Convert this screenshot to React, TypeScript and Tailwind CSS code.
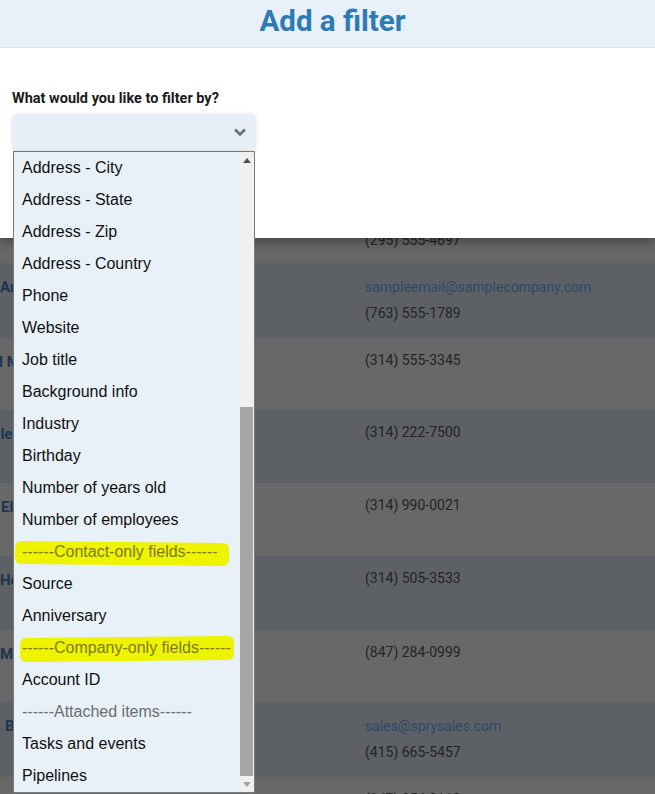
import React from "react";

const rows = [
  { name: "Ann Arbor", offset: "ml-[-40px]", email: "hidden@sample.com", phone: "(295) 555-4697", h: "h-[73px]", bg: "bg-[#686868]" },
  { name: "Arnold Reyes", offset: "ml-[0px]", email: "sampleemail@samplecompany.com", phone: "(763) 555-1789", h: "h-[75px]", bg: "bg-[#5d6166]" },
  { name: "Al Moore", offset: "ml-[-11px]", email: "", phone: "(314) 555-3345", h: "h-[72px]", bg: "bg-[#686868]" },
  { name: "Michelle Ray", offset: "ml-[-45px]", email: "", phone: "(314) 222-7500", h: "h-[73px]", bg: "bg-[#5d6166]" },
  { name: "Ellen Park", offset: "ml-[1px]", email: "", phone: "(314) 990-0021", h: "h-[73px]", bg: "bg-[#686868]" },
  { name: "Hope Lane", offset: "ml-[0px]", email: "", phone: "(314) 505-3533", h: "h-[74px]", bg: "bg-[#5d6166]" },
  { name: "Mark Stone", offset: "ml-[0px]", email: "", phone: "(847) 284-0999", h: "h-[72px]", bg: "bg-[#686868]" },
  { name: "Bob Smith", offset: "ml-[5px]", email: "sales@sprysales.com", phone: "(415) 665-5457", h: "h-[75px]", bg: "bg-[#5d6166]" },
  { name: "Tom Grey", offset: "ml-[-30px]", email: "", phone: "(847) 254-0110", h: "h-[73px]", bg: "bg-[#686868]" },
];

type Opt = { label: string; kind?: "group" | "mark" };

const options: Opt[] = [
  { label: "Address - City" },
  { label: "Address - State" },
  { label: "Address - Zip" },
  { label: "Address - Country" },
  { label: "Phone" },
  { label: "Website" },
  { label: "Job title" },
  { label: "Background info" },
  { label: "Industry" },
  { label: "Birthday" },
  { label: "Number of years old" },
  { label: "Number of employees" },
  { label: "------Contact-only fields------", kind: "mark" },
  { label: "Source" },
  { label: "Anniversary" },
  { label: "------Company-only fields------", kind: "mark" },
  { label: "Account ID" },
  { label: "------Attached items------", kind: "group" },
  { label: "Tasks and events" },
  { label: "Pipelines" },
];

const Background = () => (
  <div className="pt-[190px] font-['Roboto',sans-serif]">
    {rows.map((r, i) => (
      <div key={i} className={`flex ${r.h} ${r.bg}`}>
        <div className="w-[365px] shrink-0 pt-[14px] overflow-hidden">
          <div className={`${r.offset} text-[15px] leading-[20px] font-bold text-[#1c3550] whitespace-nowrap`}>
            {r.name}
          </div>
        </div>
        <div className="pt-[11px] text-[14px] leading-[26px]">
          {r.email && <div className="text-[#2e4a66]">{r.email}</div>}
          <div className={r.email ? "text-[#242424]" : "text-[#242424] -mt-[2px]"}>{r.phone}</div>
        </div>
      </div>
    ))}
  </div>
);

const Modal = () => (
  <div className="absolute left-0 top-0 w-full h-[238px] bg-white shadow-[0_4px_10px_rgba(0,0,0,0.35)] font-['Roboto',sans-serif]">
    <div className="h-[48px] bg-[#e8f1f9] border-b border-[#d6e4ef] flex items-center justify-center pl-[10px]">
      <h1 className="text-[29.5px] font-bold text-[#2d7bb5] leading-none -mt-[3px]">Add a filter</h1>
    </div>
    <div className="px-[12px] pt-[42px]">
      <div className="text-[14.5px] font-bold text-[#1a1a1a] leading-[17px]">What would you like to filter by?</div>
      <div className="mt-[7px] w-[242px] h-[36px] ml-[1px] rounded-[4px] bg-[#e6eff8] shadow-[0_1px_4px_rgba(0,0,0,0.18)] flex items-center justify-end pr-[8px]">
        <svg width="14" height="10" viewBox="0 0 14 10">
          <path d="M2 2.5 L7 7.5 L12 2.5" fill="none" stroke="#6b6e73" strokeWidth="2.6" />
        </svg>
      </div>
    </div>
  </div>
);

const Dropdown = () => (
  <div className="absolute left-[13px] top-[151px] w-[242px] h-[642px] border border-[#7a7a7a] bg-[#e8f0f8] flex font-['Liberation_Sans',Arial,sans-serif]">
    <div className="flex-1 flex flex-col">
      {options.map((o, i) => (
        <div key={i} className="relative h-[32px] shrink-0 flex items-center pl-[8px] text-[16px] whitespace-nowrap">
          {o.kind === "mark" && (
            <span
              className={
                i === 12
                  ? "absolute left-[1px] top-[6px] w-[214px] h-[23px] bg-[#eef300] rounded-[6px] rotate-[0.6deg]"
                  : "absolute left-[6px] top-[5px] w-[214px] h-[24px] bg-[#eef300] rounded-[6px] -rotate-[0.5deg]"
              }
            />
          )}
          <span
            className={
              o.kind === "mark"
                ? "relative text-[#7c7c1c]"
                : o.kind === "group"
                ? "relative text-[#6d6d6d]"
                : "relative text-[#111111]"
            }
          >
            {o.label}
          </span>
        </div>
      ))}
    </div>
    <div className="w-[15px] h-full bg-[#f0f0f0] flex flex-col items-center">
      <div className="h-[17px] flex items-center justify-center">
        <svg width="8" height="5" viewBox="0 0 8 5">
          <path d="M0 5 L4 0 L8 5 Z" fill="#505050" />
        </svg>
      </div>
      <div className="mt-[238px] w-[13px] h-[369px] bg-[#a6a6a6]" />
      <div className="flex-1 flex items-center justify-center">
        <svg width="8" height="5" viewBox="0 0 8 5">
          <path d="M0 0 L8 0 L4 5 Z" fill="#a3a3a3" />
        </svg>
      </div>
    </div>
  </div>
);

export default function App() {
  return (
    <div className="relative w-[655px] h-[794px] overflow-hidden bg-[#686868]">
      <Background />
      <Modal />
      <Dropdown />
    </div>
  );
}
